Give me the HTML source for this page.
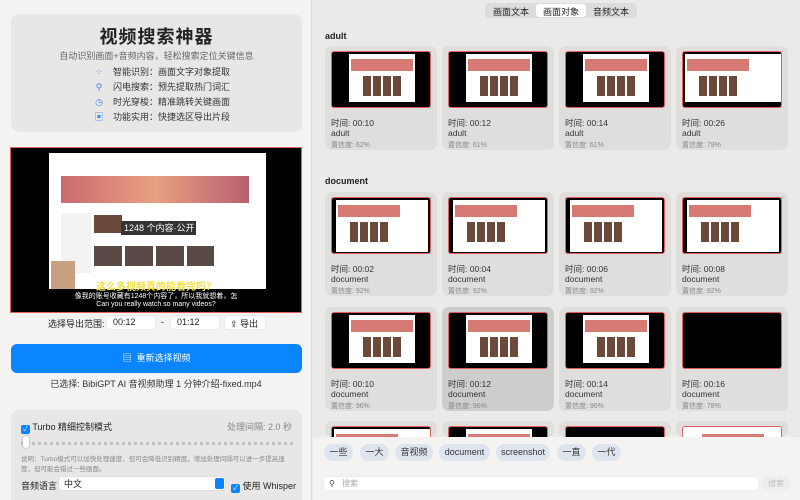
<!DOCTYPE html>
<html><head><meta charset="utf-8"><style>
*{box-sizing:border-box;margin:0;padding:0}
html{width:800px;height:500px;overflow:hidden}
body{width:800px;height:500px;overflow:hidden;font-family:"Liberation Sans","Noto Sans CJK SC",sans-serif;background:#eceae9;position:relative;color:#222}
.left{position:absolute;left:0;top:0;width:312px;height:500px;background:#f5f3f2;border-right:1px solid #dddbda}
.card1{position:absolute;left:11px;top:14px;width:291px;height:118px;background:#e9e7e6;border-radius:8px;text-align:center}
.card1 h1{font-size:18px;font-weight:bold;margin-top:11px;line-height:24px;color:#222;letter-spacing:1px}
.card1 .sub{font-size:9px;color:#666;margin-top:1px;line-height:12px}
.feat{position:absolute;left:82px;font-size:9px;color:#333;line-height:12px}
.feat i{display:inline-block;width:12px;color:#3a7ee8;font-style:normal;margin-right:8px;text-align:center}
.video{position:absolute;left:10px;top:147px;width:292px;height:166px;background:#000;border:1px solid #e06060}
.shot{position:absolute;left:38px;top:5px;width:217px;height:136px;background:#fff}
.range{position:absolute;top:315px;font-size:9px}
.inp{position:absolute;top:316px;height:13px;background:#fff;border-radius:3px;font-size:9px;padding:1px 0 0 6px;box-shadow:0 0 1px #bbb}
.btn{position:absolute;left:11px;top:344px;width:291px;height:29px;background:#0a84ff;border-radius:6px;color:#fff;font-size:9px;text-align:center;line-height:29px}
.sel{position:absolute;top:377px;width:312px;text-align:center;font-size:9px;color:#333}
.set{position:absolute;left:11px;top:410px;width:291px;height:90px;background:#e9e7e6;border-radius:8px 8px 0 0}
.cb{display:inline-block;width:9px;height:9px;background:#0a84ff;border-radius:2px;color:#fff;font-size:7px;line-height:9px;text-align:center;vertical-align:-1px}
.tabs{position:absolute;left:485px;top:3px;height:15px;background:#dedcdb;border-radius:4px;font-size:9px;display:flex;padding:1px}
.tabs span{padding:1px 7px}
.tabs .on{background:#fff;border-radius:3px}
.sec{position:absolute;left:325px;font-size:9px;font-weight:bold}
.c{position:absolute;width:112px;height:104px;background:#e0dedd;border-radius:7px;overflow:hidden}
.c.hl{background:#cfcdcc}
.t{position:absolute;left:6px;top:5px;width:100px;height:57px;background:#000;border:1px solid #e06060;border-radius:3px;overflow:hidden}
.t b{position:absolute;left:17px;top:2px;width:66px;height:48px;background:#fff}
.t b:before{content:"";position:absolute;left:2px;top:5px;width:62px;height:12px;background:#d77a74}
.t b:after{content:"";position:absolute;left:14px;top:22px;width:40px;height:20px;background:repeating-linear-gradient(90deg,#6b4a3a 0 8px,#fff 8px 10px)}
.t.d b{left:4px;width:92px;height:52px}
.t.k b{display:none}
.c .l1{position:absolute;left:6px;top:71px;font-size:8.5px;color:#333}
.c .l2{position:absolute;left:6px;top:82px;font-size:8.5px;color:#333}
.c .l3{position:absolute;left:6px;top:94px;font-size:7px;color:#888}
.bottom{position:absolute;left:313px;top:437px;width:487px;height:63px;background:#f5f3f2}
.chip{position:absolute;top:7px;height:17px;background:#dfe5ef;border-radius:9px;font-size:9px;line-height:17px;text-align:center;color:#333}
.search{position:absolute;left:11px;top:40px;width:434px;height:13px;background:#fff;border-radius:3px;font-size:8px;color:#aaa;padding-left:18px;line-height:13px;box-shadow:0 0 1px #ccc}
</style></head><body>
<div class="left">
 <div class="card1">
  <h1>视频搜索神器</h1>
  <div class="sub">自动识别画面+音频内容，轻松搜索定位关键信息</div>
  <div class="feat" style="top:52px"><i>⁘</i>智能识别：画面文字对象提取</div>
  <div class="feat" style="top:67px"><i>⚲</i>闪电搜索：预先提取热门词汇</div>
  <div class="feat" style="top:82px"><i>◷</i>时光穿梭：精准跳转关键画面</div>
  <div class="feat" style="top:97px"><i>▣</i>功能实用：快捷选区导出片段</div>
 </div>
 <div class="video">
  <div class="shot">
   <div style="position:absolute;left:12px;top:23px;width:188px;height:27px;background:linear-gradient(90deg,#c96a70,#e8a080,#b86070)"></div>
   <div style="position:absolute;left:12px;top:60px;width:30px;height:60px;background:#f3f3f3"></div>
   <div style="position:absolute;left:45px;top:62px;width:28px;height:18px;background:#6b4a3a"></div>
   <div style="position:absolute;left:45px;top:93px;width:120px;height:20px;background:repeating-linear-gradient(90deg,#5a4a45 0 28px,#fff 28px 31px)"></div>
   <div style="position:absolute;left:72px;top:68px;width:75px;height:14px;background:#333;color:#fff;font-size:9px;line-height:14px;padding-left:3px">1248 个内容·公开</div>
   <div style="position:absolute;left:2px;top:108px;width:24px;height:28px;background:#c9a080"></div>
  </div>
  <div style="position:absolute;left:0;top:130px;width:290px;text-align:center;font-size:10px;color:#f0e040;font-weight:bold">这么多视频真的能看完吗？</div>
  <div style="position:absolute;left:0;top:143px;width:290px;text-align:center;font-size:7px;color:#fff">像我的账号收藏有1248个内容了，所以我就想着，怎<br>Can you really watch so many videos?</div>
 </div>
 <div class="range" style="left:48px;top:317px">选择导出范围:</div>
 <div class="inp" style="left:107px;width:48px">00:12</div>
 <div style="position:absolute;left:161px;top:317px;font-size:9px">-</div>
 <div class="inp" style="left:171px;width:48px">01:12</div>
 <div class="inp" style="left:225px;width:40px;padding-left:5px">⇪ 导出</div>
 <div class="btn">▤&nbsp; 重新选择视频</div>
 <div class="sel">已选择: BibiGPT AI 音视频助理 1 分钟介绍-fixed.mp4</div>
 <div class="set">
  <div style="position:absolute;left:10px;top:10px;font-size:9px"><span class="cb">✓</span> Turbo 精细控制模式</div>
  <div style="position:absolute;right:10px;top:10px;font-size:9px;color:#888">处理间隔: 2.0 秒</div>
  <div style="position:absolute;left:10px;top:32px;width:272px;height:2px;border-top:3px dotted #c4c2c1"></div>
  <div style="position:absolute;left:12px;top:26px;width:6px;height:12px;background:#fff;border-radius:3px;box-shadow:0 0 2px #999"></div>
  <div style="position:absolute;left:10px;top:45px;width:275px;font-size:6.5px;color:#888;line-height:10px">说明：Turbo模式可以加快处理速度，但可会降低识别精度。增加处理间隔可以进一步提高速度，但可能会错过一些画面。</div>
  <div style="position:absolute;left:10px;top:69px;font-size:9px">音频语言</div>
  <div style="position:absolute;left:48px;top:67px;width:166px;height:13px;background:#fff;border-radius:3px;font-size:9px;padding-left:5px;box-shadow:0 0 1px #bbb">中文<span style="position:absolute;right:1px;top:1px;width:9px;height:11px;background:#0a84ff;border-radius:2px"></span></div>
  <div style="position:absolute;left:220px;top:69px;font-size:9px"><span class="cb">✓</span> 使用 Whisper</div>
 </div>
</div>
<div class="tabs"><span>画面文本</span><span class="on">画面对象</span><span>音频文本</span></div>
<div class="sec" style="top:31px">adult</div>
<div class="sec" style="top:176px">document</div>

<div class="c" style="left:325px;top:46px"><div class="t"><b></b></div><div class="l1">时间: 00:10</div><div class="l2">adult</div><div class="l3">置信度: 62%</div></div>
<div class="c" style="left:442px;top:46px"><div class="t"><b></b></div><div class="l1">时间: 00:12</div><div class="l2">adult</div><div class="l3">置信度: 61%</div></div>
<div class="c" style="left:559px;top:46px"><div class="t"><b></b></div><div class="l1">时间: 00:14</div><div class="l2">adult</div><div class="l3">置信度: 61%</div></div>
<div class="c" style="left:676px;top:46px"><div class="t"><b style="left:2px;width:96px"></b></div><div class="l1">时间: 00:26</div><div class="l2">adult</div><div class="l3">置信度: 79%</div></div>

<div class="c" style="left:325px;top:192px"><div class="t d"><b></b></div><div class="l1">时间: 00:02</div><div class="l2">document</div><div class="l3">置信度: 92%</div></div>
<div class="c" style="left:442px;top:192px"><div class="t d"><b></b></div><div class="l1">时间: 00:04</div><div class="l2">document</div><div class="l3">置信度: 92%</div></div>
<div class="c" style="left:559px;top:192px"><div class="t d"><b></b></div><div class="l1">时间: 00:06</div><div class="l2">document</div><div class="l3">置信度: 92%</div></div>
<div class="c" style="left:676px;top:192px"><div class="t d"><b></b></div><div class="l1">时间: 00:08</div><div class="l2">document</div><div class="l3">置信度: 92%</div></div>

<div class="c" style="left:325px;top:307px"><div class="t"><b></b></div><div class="l1">时间: 00:10</div><div class="l2">document</div><div class="l3">置信度: 96%</div></div>
<div class="c hl" style="left:442px;top:307px"><div class="t"><b></b></div><div class="l1">时间: 00:12</div><div class="l2">document</div><div class="l3">置信度: 96%</div></div>
<div class="c" style="left:559px;top:307px"><div class="t"><b></b></div><div class="l1">时间: 00:14</div><div class="l2">document</div><div class="l3">置信度: 96%</div></div>
<div class="c" style="left:676px;top:307px"><div class="t k"><b></b></div><div class="l1">时间: 00:16</div><div class="l2">document</div><div class="l3">置信度: 78%</div></div>

<div class="c" style="left:325px;top:421px;height:16px"><div class="t"><b style="left:2px;width:96px"></b></div></div>
<div class="c" style="left:442px;top:421px;height:16px"><div class="t"><b></b></div></div>
<div class="c" style="left:559px;top:421px;height:16px"><div class="t k"><b></b></div></div>
<div class="c" style="left:676px;top:421px;height:16px"><div class="t" style="background:#fff"><b></b></div></div>

<div class="bottom">
 <div class="chip" style="left:11px;width:29px">一些</div>
 <div class="chip" style="left:47px;width:29px">一大</div>
 <div class="chip" style="left:82px;width:38px">音视频</div>
 <div class="chip" style="left:126px;width:51px">document</div>
 <div class="chip" style="left:183px;width:54px">screenshot</div>
 <div class="chip" style="left:244px;width:29px">一直</div>
 <div class="chip" style="left:279px;width:29px">一代</div>
 <div class="search"><span style="position:absolute;left:5px;top:0;color:#444">⚲</span>搜索</div>
 <div style="position:absolute;left:449px;top:39px;width:28px;height:15px;background:#f0eeed;border-radius:3px;font-size:8px;color:#bbb;text-align:center;line-height:15px">搜索</div>
</div>
</body></html>
